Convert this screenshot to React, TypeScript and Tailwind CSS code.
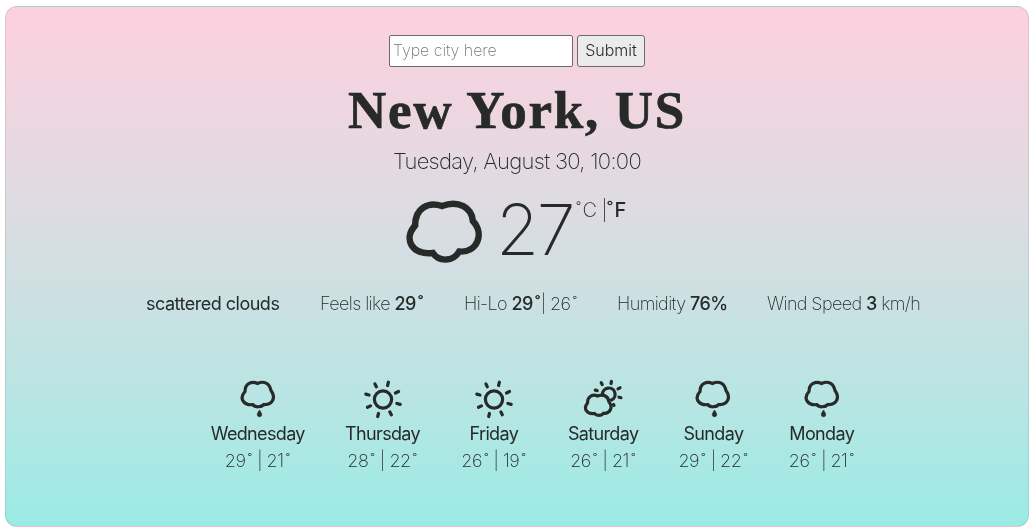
import React from "react";

const INK = "#272a29";

function Cloud() {
  return (
    <svg width="77" height="63" viewBox="0 0 76 63" preserveAspectRatio="none" fill="none" stroke={INK} strokeWidth="6.400">
      <path d="M9 25.500 C9 8 22 1.500 35.500 6 C52 -0.500 65 8 66 21 C78 34 70 53 52.500 51.500 C46.500 62 32.500 62 26.500 53 C6 55.500 -3 39 9 25.500 Z" />
    </svg>
  );
}

function Rain() {
  return (
    <svg width="36" height="40" viewBox="0 0 36 40" fill="none">
      <path d="M5 12.500 C5 4 12 2 17.500 4.500 C24 1.500 29.500 4 31 11.500 C36 18 33 26 24 25.500 C21 28.500 15 28.500 13 25.700 C3 26.500 -1 19 5 12.500 Z" stroke={INK} strokeWidth="3.200" />
      <path d="M19.500 31 C18.500 33 17.300 34 17.300 35.500 a2.200 2.200 0 0 0 4.400 0 C21.700 34 20.500 33 19.500 31 Z" fill={INK} stroke={INK} strokeWidth="0.700" />
    </svg>
  );
}

function Sun() {
  return (
    <svg width="40" height="40" viewBox="0 0 40 40" fill="none" stroke={INK} strokeWidth="3.200" strokeLinecap="round">
      <circle cx="20" cy="20.500" r="8.600" />
      <path d="M24.600 6.500 25.400 3.200M32.500 14 35.500 12.500M33.900 24.500 37.200 25.400M26.900 33 28.300 35.800M15.500 34.500 14.700 37.500M7.500 26.900 4.500 28.300M6 16 2.800 15.100M13.300 7.800 11.900 4.900" />
    </svg>
  );
}

function PartlySunny() {
  return (
    <svg width="40" height="40" viewBox="0 0 40 40" fill="none" stroke={INK} strokeWidth="3.200" strokeLinecap="round">
      <path d="M19.500 15.500 A6.300 6.300 0 1 1 28.500 21" />
      <path d="M28 4.500 28.500 2.500M35 9.900 37 8.800M36 18.200 38 18.700M30.500 25.500 31 26.300M19.200 5.500 18.200 3.700M14.200 11.600 12.300 11.100" />
      <path d="M4.500 24 C4.500 17 10 15 14.500 17 C20.500 14.500 25.500 17.500 26 23 C30.500 28 27 35 20.500 34.300 C18 37 13.500 37 11.500 34.500 C3.500 35.500 0 29.500 4.500 24 Z" />
    </svg>
  );
}

function Deg() {
  return <span className="mr-px ml-[2px]">˚</span>;
}

const details = [
  { w: "w-[134px]", body: <b className="font-normal tracking-[-0.5px]">scattered clouds</b> },
  { w: "w-[104px]", body: <>Feels like <b className="font-medium">29<Deg /></b></> },
  { w: "w-[113px]", body: <>Hi-Lo <b className="font-medium">29<Deg /></b>| 26<Deg /></> },
  { w: "w-[110px]", body: <>Humidity <b className="font-medium">76%</b></> },
  { w: "w-[153px]", body: <>Wind Speed <b className="font-medium">3</b> km/h</> },
];

const days = [
  { name: "Wednesday", hi: 29, lo: 21, w: "w-[94px]", icon: <Rain /> },
  { name: "Thursday", hi: 28, lo: 22, w: "w-[75px]", icon: <Sun /> },
  { name: "Friday", hi: 26, lo: 19, w: "w-[67px]", icon: <Sun /> },
  { name: "Saturday", hi: 26, lo: 21, w: "w-[71px]", icon: <PartlySunny /> },
  { name: "Sunday", hi: 29, lo: 22, w: "w-[69px]", icon: <Rain /> },
  { name: "Monday", hi: 26, lo: 21, w: "w-[67px]", icon: <Rain /> },
];

export default function App() {
  return (
    <main className="h-[531px] bg-white pt-[6px] pl-[5px] font-['Inter',sans-serif] font-extralight text-[#272a29]">
      <section className="flex h-[521px] w-[1024px] flex-col items-center rounded-[12px] border border-[#80808033] bg-linear-to-b from-[#fed0df] to-[#9aebe5] pt-[28px] will-change-transform">
        <form className="flex h-8 gap-1" onSubmit={(e) => e.preventDefault()}>
          <input className="w-[184px] rounded-[2px] border border-[#6b6b6b] bg-white px-[3px] pb-[2px] text-[16px] tracking-[-0.05px] placeholder:text-[#757575]" placeholder="Type city here" />
          <button className="w-[68px] rounded-[3px] border border-[#6b6b6b] bg-[#ebebeb] pb-[2px] text-[16px] font-light">Submit</button>
        </form>
        <h1 className="mt-[12px] h-[62px] font-['Liberation_Serif',serif] text-[53px] leading-[62px] font-bold tracking-[1.7px] whitespace-nowrap [-webkit-text-stroke:0.7px_#272a29]">New York, US</h1>
        <p className="mt-[5px] h-[30px] text-[22px] leading-[30px] tracking-[-0.7px] whitespace-nowrap">Tuesday, August 30, 10:00</p>
        <div className="mt-[18px] flex h-[72px] w-[222px] items-start">
          <div className="mt-[6px] w-[77px] shrink-0"><Cloud /></div>
          <span className="ml-[13px] w-[80px] shrink-0 text-[70px] leading-[71px] tracking-[-2.5px]">27</span>
          <span className="mt-[4px] text-[20px] leading-[24px] tracking-[-0.6px] whitespace-nowrap">˚<span className="ml-[2px]">C |</span><b className="font-medium">˚<span className="ml-[2px]">F</span></b></span>
        </div>
        <ul className="mt-[24px] ml-[32px] flex h-[28px] gap-10 text-[18px] leading-[28px] tracking-[-0.6px]">
          {details.map((d, i) => (
            <li key={i} className={`${d.w} whitespace-nowrap`}>{d.body}</li>
          ))}
        </ul>
        <ul className="mt-[61px] ml-[32px] flex gap-[40.300px] text-[18px]">
          {days.map((d) => (
            <li key={d.name} className={`${d.w} flex flex-col items-center whitespace-nowrap`}>
              <div className="h-[41px]">{d.icon}</div>
              <span className="h-[27px] leading-[27px] font-normal tracking-[-0.65px]">{d.name}</span>
              <span className="h-[27px] leading-[27px] tracking-[-0.5px]">{d.hi}<Deg /> | {d.lo}<Deg /></span>
            </li>
          ))}
        </ul>
      </section>
    </main>
  );
}
